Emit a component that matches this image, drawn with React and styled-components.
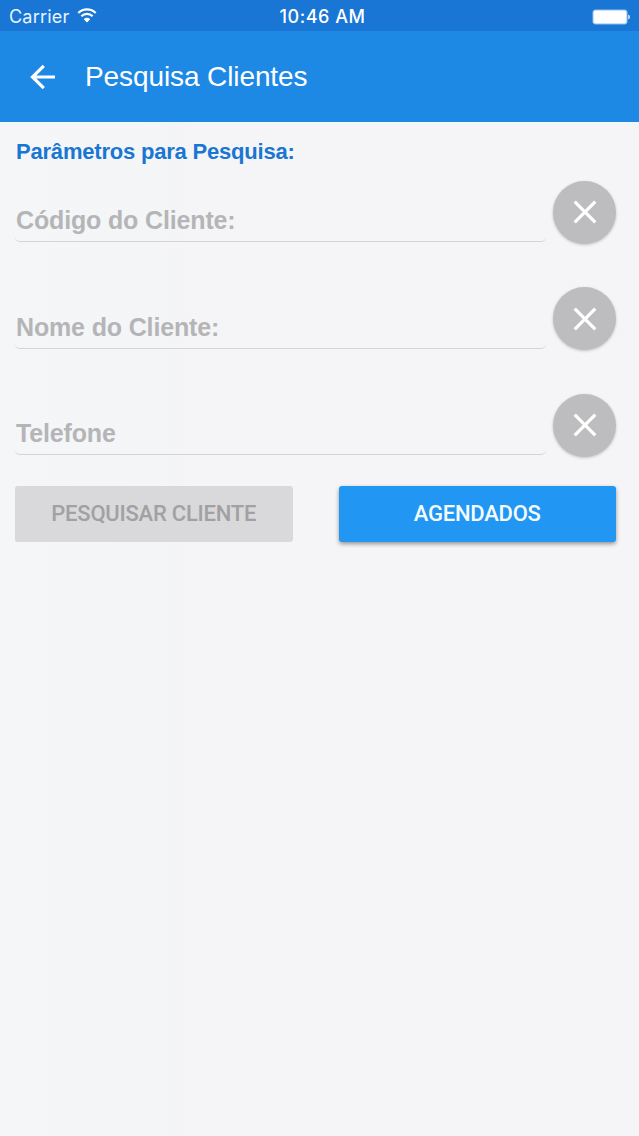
import styled, { createGlobalStyle } from "styled-components";

//Styles
const GlobalStyle = createGlobalStyle`
  * {
    box-sizing: border-box;
  }

  body {
    margin: 0;
    background: #f5f4f6;
  }
`;

const Screen = styled.div`
  min-height: 1136px;
  background: linear-gradient(90deg, #f4f6f8 0, #f4f5f7 160px, #f5f4f6 190px);
  font-family: "Liberation Sans", Arial, sans-serif;
`;

const StatusBar = styled.div`
  display: grid;
  grid-template-columns: 1fr auto 1fr;
  align-items: center;
  height: 31px;
  padding: 1px 9px 0 9px;
  background: #1976d5;
  color: #fff;
  font-family: Inter, sans-serif;
  font-size: 18px;
  line-height: 30px;
`;

const Carrier = styled.div`
  display: flex;
  align-items: center;
  gap: 8px;
  padding-top: 1px;
  letter-spacing: 0.2px;
  color: #e9f4ff;

  svg {
    margin-bottom: 3px;
  }
`;

const Clock = styled.div`
  padding: 1px 0 0 6px;
  font-weight: 500;
  letter-spacing: 0.55px;
`;

const Battery = styled.svg`
  justify-self: end;
`;

const Toolbar = styled.header`
  display: flex;
  align-items: center;
  gap: 29px;
  height: 91px;
  padding-left: 30px;
  background: #1e88e5;
  color: #fff;
`;

const Title = styled.h1`
  margin: 0;
  font-size: 28px;
  font-weight: 400;
  line-height: 32px;
  letter-spacing: -0.1px;
  white-space: nowrap;
`;

const Content = styled.main`
  padding: 17px 23px 0 15px;
`;

const Heading = styled.h2`
  margin: 0 0 15px;
  padding-left: 1px;
  color: #1976d2;
  font-size: 22px;
  line-height: 26px;
  letter-spacing: -0.2px;
`;

const Row = styled.div`
  display: flex;
  align-items: flex-start;
  justify-content: space-between;
  height: 106.5px;
`;

const Field = styled.div`
  width: 531px;
  height: 62px;
  padding: 26px 0 0 1px;
  border-bottom: 1.5px solid #d4d3d6;
  border-radius: 5px;
  color: #b5b5b7;
  font-size: 25px;
  font-weight: 700;
  line-height: 28px;
  letter-spacing: -0.15px;
`;

const ClearButton = styled.button`
  display: flex;
  align-items: center;
  justify-content: center;
  width: 63px;
  height: 63px;
  margin-top: 0.5px;
  padding: 0;
  border: 0;
  border-radius: 50%;
  background: #bdbcbe;
  box-shadow: 0 1px 3px rgba(0, 0, 0, 0.22);
  color: #fff;
`;

const Actions = styled.div`
  display: flex;
  justify-content: space-between;
  margin-top: -14px;
`;

const Button = styled.button`
  width: 277.5px;
  height: 56px;
  padding: 0 0 1px;
  border: 0;
  border-radius: 3px;
  background: ${({ $primary }) => ($primary ? "#2196f3" : "#d9d8da")};
  box-shadow: ${({ $primary }) =>
    $primary ? "0 2px 4px rgba(0, 0, 0, 0.4)" : "none"};
  color: ${({ $primary }) => ($primary ? "#f5fcff" : "#a1a0a3")};
  font-family: Roboto, sans-serif;
  font-size: 22px;
  font-weight: 500;
  letter-spacing: -0.23px;
  white-space: nowrap;
`;

const fields = ["Código do Cliente:", "Nome do Cliente:", "Telefone"];

const WifiIcon = () => (
  <svg width="20" height="15" viewBox="0 0 20 15" fill="none">
    <path
      d="M1.300 5a12.400 12.400 0 0 1 17.400 0M4.400 8.300a7.900 7.900 0 0 1 11.200 0"
      stroke="#fff"
      strokeWidth="2.300"
    />
    <path d="M10 14.400l-3.200-3.200a4.500 4.500 0 0 1 6.400 0z" fill="#fff" />
  </svg>
);

const BatteryIcon = () => (
  <Battery width="38" height="16" viewBox="0 0 38 16">
    <rect x="0.5" y="0.5" width="35" height="15" rx="3" fill="#8fc0f4" />
    <rect x="1.5" y="1.5" width="33" height="13" rx="2" fill="#fff" />
    <path d="M36.3 5.5c2 .8 2 4.200 0 5z" fill="#fff" />
  </Battery>
);

const BackIcon = () => (
  <svg width="26" height="26" viewBox="0 0 26 26" fill="none">
    <path d="M13.800 1.800L2.500 13l11.300 11.200M2.500 13H25" stroke="#fff" strokeWidth="3.200" />
  </svg>
);

const CloseIcon = () => (
  <svg width="24" height="24" viewBox="0 0 24 24" fill="none">
    <path d="M1.700 1.700l20.600 20.600M22.300 1.700L1.700 22.300" stroke="currentColor" strokeWidth="3.200" />
  </svg>
);

const SearchField = ({ label }) => {
  return (
    <Row>
      <Field>{label}</Field>
      <ClearButton type="button">
        <CloseIcon />
      </ClearButton>
    </Row>
  );
};

function App() {
  return (
    <Screen>
      <GlobalStyle />
      <StatusBar>
        <Carrier>
          Carrier
          <WifiIcon />
        </Carrier>
        <Clock>10:46 AM</Clock>
        <BatteryIcon />
      </StatusBar>
      <Toolbar>
        <BackIcon />
        <Title>Pesquisa Clientes</Title>
      </Toolbar>
      <Content>
        <Heading>Parâmetros para Pesquisa:</Heading>
        {fields.map((label) => (
          <SearchField key={label} label={label} />
        ))}
        <Actions>
          <Button type="button" disabled>
            PESQUISAR CLIENTE
          </Button>
          <Button type="button" $primary>
            AGENDADOS
          </Button>
        </Actions>
      </Content>
    </Screen>
  );
}

export default App;
